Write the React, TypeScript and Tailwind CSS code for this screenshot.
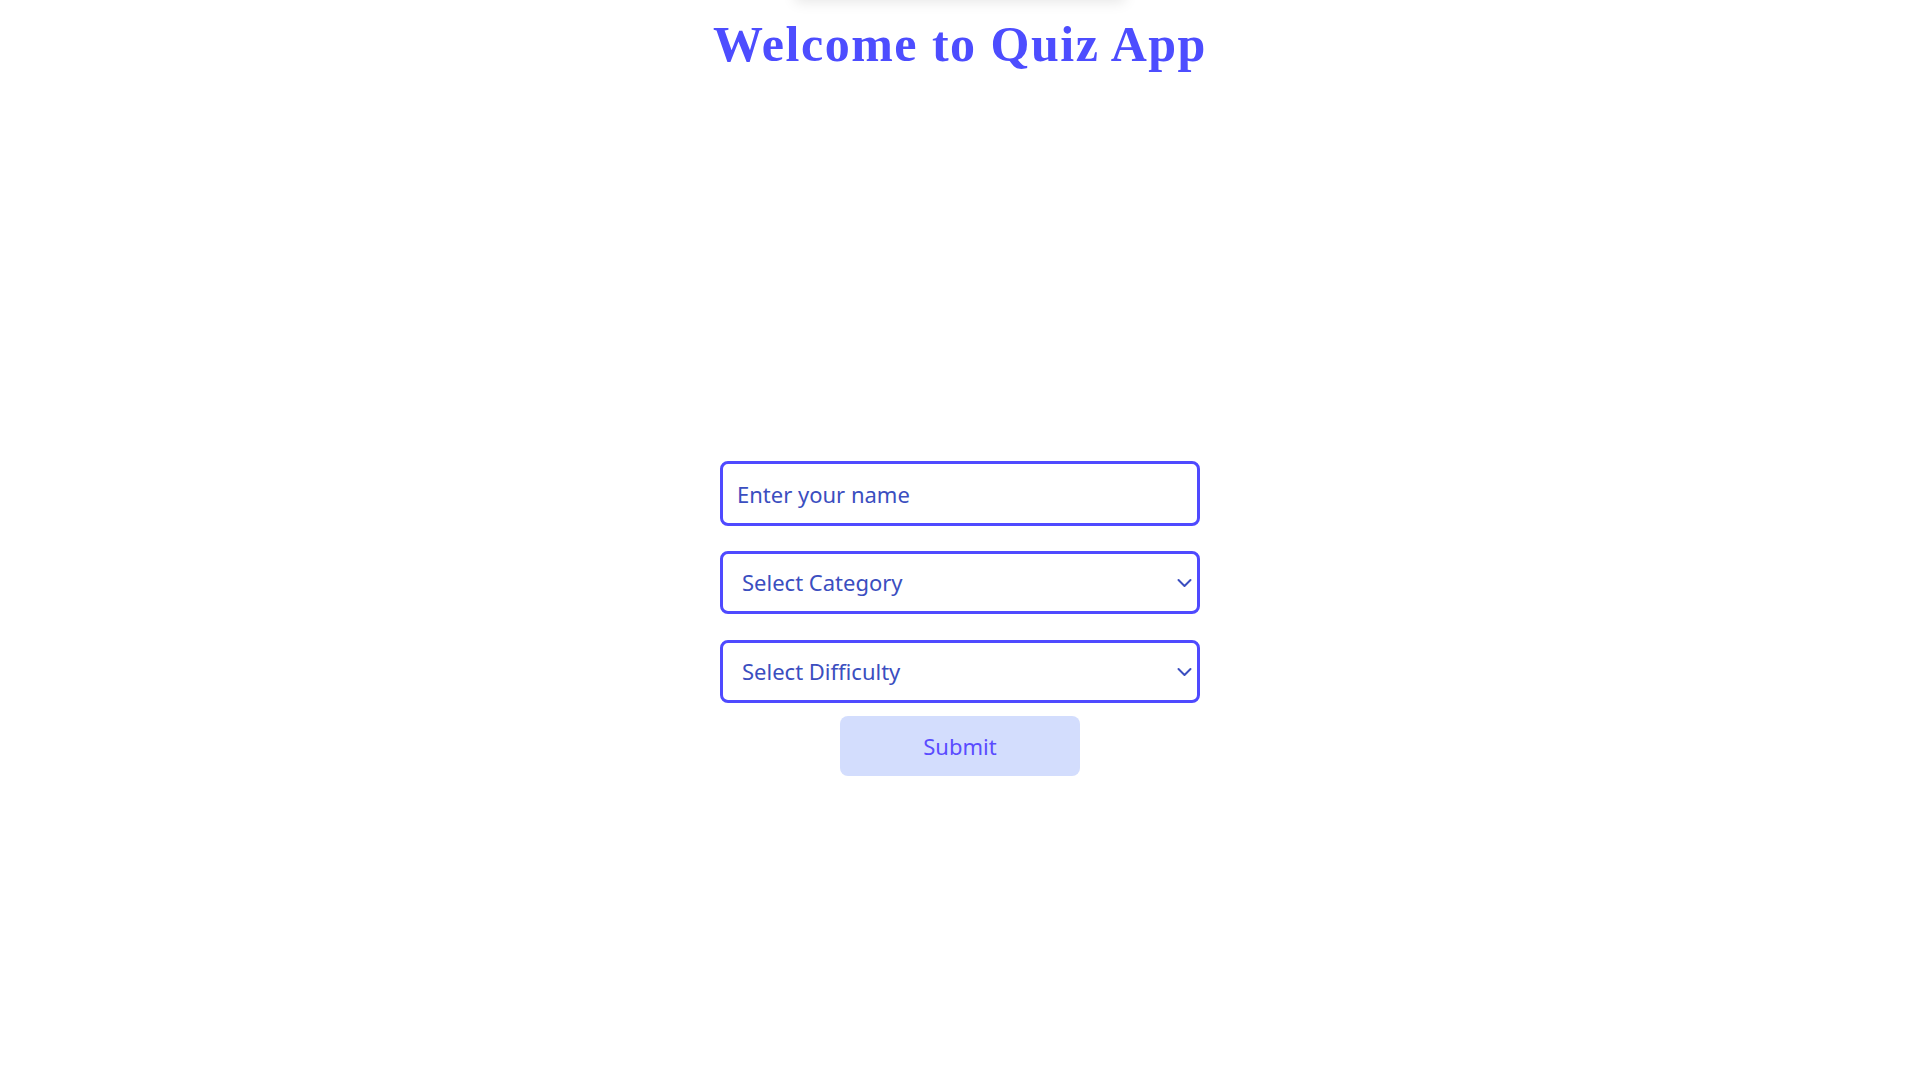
import React from "react";

function Chevron() {
  return (
    <svg
      className="pointer-events-none absolute right-[8px] top-1/2 -translate-y-1/2"
      width="15"
      height="10"
      viewBox="0 0 15 10"
      fill="none"
    >
      <path d="M1.5 2 L7.5 8 L13.5 2" stroke="#3b4ec0" strokeWidth="2" strokeLinecap="round" strokeLinejoin="round" />
    </svg>
  );
}

export default function App() {
  return (
    <div className="min-h-screen w-full bg-white flex flex-col items-center" style={{ fontFamily: '"Noto Sans", "Open Sans", sans-serif' }}>
      <div className="-mt-[40px] h-[40px] w-[330px] bg-white shadow-[0_2px_14px_rgba(0,0,0,0.10)]" />
      <h1
        className="mt-[17px] text-[50px] leading-[54px] font-bold tracking-[1.5px] text-[#4d4dff]"
        style={{ fontFamily: '"Liberation Serif", "Times New Roman", serif' }}
      >
        Welcome to Quiz App
      </h1>
      <form className="mt-[390px] w-[480px] flex flex-col items-center" onSubmit={(e) => e.preventDefault()}>
        <input
          type="text"
          placeholder="Enter your name"
          className="w-full h-[65px] rounded-[8px] border-[3px] border-[#4f4aff] px-[14px] text-[22px] text-[#3b4ec0] placeholder:text-[#3b4ec0] outline-none"
        />
        <div className="relative w-full mt-[25px]">
          <select className="w-full h-[63px] appearance-none rounded-[8px] border-[3px] border-[#4f4aff] bg-white pl-[19px] pr-[30px] text-[22px] text-[#3b4ec0] outline-none">
            <option>Select Category</option>
          </select>
          <Chevron />
        </div>
        <div className="relative w-full mt-[26px]">
          <select className="w-full h-[63px] appearance-none rounded-[8px] border-[3px] border-[#4f4aff] bg-white pl-[19px] pr-[30px] text-[22px] text-[#3b4ec0] outline-none">
            <option>Select Difficulty</option>
          </select>
          <Chevron />
        </div>
        <button
          type="submit"
          className="mt-[13px] w-[240px] h-[60px] rounded-[8px] bg-[#d3ddfd] text-[22px] text-[#5a4cff]"
        >
          Submit
        </button>
      </form>
    </div>
  );
}
